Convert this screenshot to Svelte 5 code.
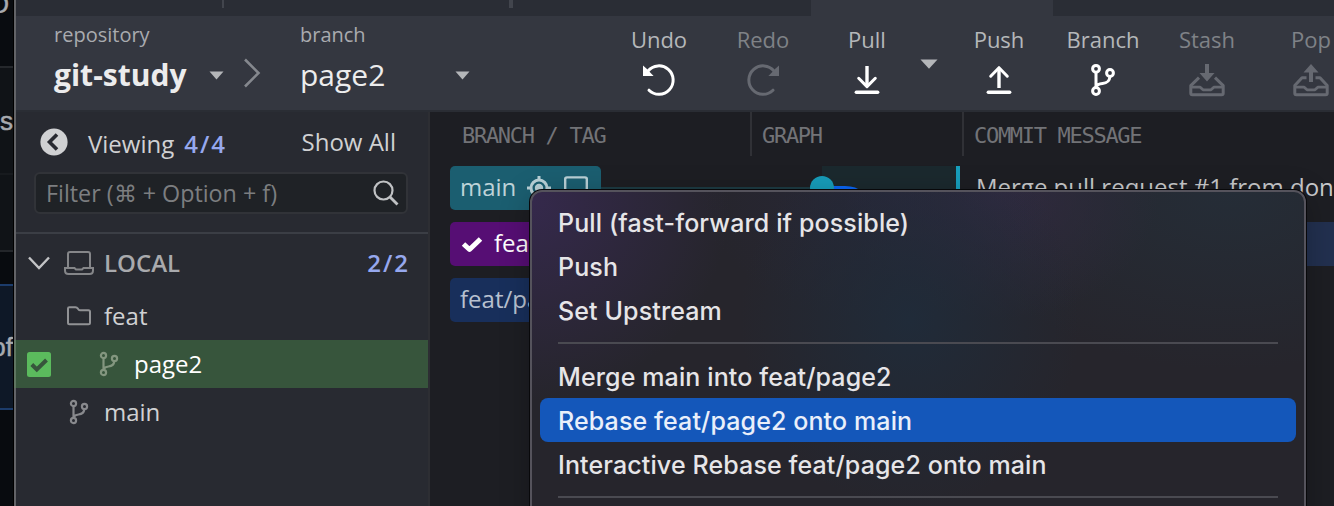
<script>
  const tools = [
    { label: 'Undo', icon: 'undo' },
    { label: 'Redo', icon: 'redo', off: true },
    { label: 'Pull', icon: 'pull', caret: true },
    { label: 'Push', icon: 'push' },
    { label: 'Branch', icon: 'branch' },
    { label: 'Stash', icon: 'stash', off: true },
    { label: 'Pop', icon: 'pop', off: true }
  ];
  const menu = [
    'Pull (fast-forward if possible)',
    'Push',
    'Set Upstream',
    null,
    'Merge main into feat/page2',
    'Rebase feat/page2 onto main',
    'Interactive Rebase feat/page2 onto main',
    null
  ];
  const active = 'Rebase feat/page2 onto main';
</script>

{#snippet fork()}
  <svg class="fork" viewBox="0 0 20 26" width="20" height="26" fill="none" stroke="currentColor" stroke-width="2.2">
    <circle cx="4.5" cy="4.5" r="2.6" /><circle cx="15.5" cy="7.5" r="2.6" /><circle cx="4.5" cy="21.5" r="2.6" />
    <path d="M4.5 7V19M15.3 10.2C15 14.5 12.5 15.2 9.5 15.5C7 15.8 5.5 16.2 4.8 18" />
  </svg>
{/snippet}

<div class="screen">
  <div class="behind">
    <div class="seg a"><span class="cap">D</span></div>
    <div class="seg b"><span>s</span></div>
    <div class="seg c"></div>
    <div class="seg d"></div>
    <div class="seg e"><span>of</span></div>
    <div class="seg f"></div>
  </div>

  <div class="window">
    <div class="tabs">
      <i class="t1"></i><i class="t2"></i><i class="t3"></i><i class="on"></i>
    </div>

    <header class="toolbar">
      <div class="repo">
        <small>repository</small>
        <div class="pick"><b>git-study</b><svg class="caret" width="15" height="9" viewBox="0 0 15 9"><path d="M.5 .5H14.5L7.5 8.5Z" fill="#b4b6b9" /></svg></div>
      </div>
      <svg class="crumb" width="18" height="30" viewBox="0 0 18 30" fill="none" stroke="#85888e" stroke-width="2.6"><path d="M2 1.5L15.5 15L2 28.5" /></svg>
      <div class="ref">
        <small>branch</small>
        <div class="pick"><span>page2</span><svg class="caret" width="15" height="9" viewBox="0 0 15 9"><path d="M.5 .5H14.5L7.5 8.5Z" fill="#b4b6b9" /></svg></div>
      </div>
      <div class="tools">
        {#each tools as t}
          <div class="tool" class:off={t.off}>
            <span>{t.label}</span>
            <svg width="36" height="36" viewBox="0 0 36 36" fill="none" stroke="currentColor" stroke-width="3" stroke-linecap="round">
              {#if t.icon === 'undo' || t.icon === 'redo'}
                <g transform={t.icon === 'redo' ? 'translate(36 0) scale(-1 1)' : undefined}>
                  <path d="M8 28.2A14.2 14.2 0 1 0 7 9" />
                  <path d="M2 3.6V14H12.6L9.2 10.4 5.4 6.6Z" fill="currentColor" stroke="none" />
                </g>
              {:else if t.icon === 'pull'}
                <path d="M18 4V24" stroke-linecap="butt" stroke-width="3.4" /><path d="M9.7 16.3L18 24.6L26.3 16.3" stroke-linejoin="round" /><path d="M7.3 30.3H28.7" stroke-width="3.4" />
              {:else if t.icon === 'push'}
                <path d="M18 6V26" stroke-linecap="butt" stroke-width="3.4" /><path d="M9.7 14.2L18 5.7L26.3 14.2" stroke-linejoin="round" /><path d="M7.3 30.3H28.7" stroke-width="3.4" />
              {:else if t.icon === 'branch'}
                <circle cx="11" cy="6.8" r="3.4" /><circle cx="25" cy="11" r="3.4" /><circle cx="11" cy="29" r="3.4" />
                <path d="M11 10.5V25M24.8 15C24.5 20 21.5 21 17.5 21.4C14.5 21.7 12.3 22 11.3 24" />
              {:else}
                <path stroke-linecap="butt" stroke-linejoin="round" d={t.icon === 'stash' ? 'M10 15.6L1.8 23.6V31.2Q1.8 32.7 3.3 32.7H32.7Q34.2 32.7 34.2 31.2V23.6L26 15.6' : 'M13.5 15.8H9L1.8 23.6V31.2Q1.8 32.7 3.3 32.7H32.7Q34.2 32.7 34.2 31.2V23.6L27 15.8H22.5'} />
                <path stroke-linecap="butt" stroke-linejoin="round" d="M2 25.2H11.2L14 27.8H22L24.8 25.2H34" stroke-width="2.8" />
                {#if t.icon === 'stash'}
                  <path d="M16 2H20V11H25.5L18 19.5L10.5 11H16Z" fill="currentColor" stroke="none" />
                {:else}
                  <path d="M16 20H20V10.5H25.5L18 2L10.5 10.5H16Z" fill="currentColor" stroke="none" />
                {/if}
              {/if}
            </svg>
          </div>
          {#if t.caret}
            <svg class="more" width="18" height="10" viewBox="0 0 18 10"><path d="M.5 .5H17.5L9 9.8Z" fill="#b4b6b9" /></svg>
          {/if}
        {/each}
      </div>
    </header>

    <div class="body">
      <aside>
        <div class="viewing">
          <svg width="28" height="28" viewBox="0 0 28 28"><circle cx="14" cy="14" r="13.6" fill="#d0d1d3" /><path d="M17 6.5L9.5 14L17 21.5" fill="none" stroke="#282a31" stroke-width="3.6" /></svg>
          <span class="v">Viewing</span><span class="n">4/4</span><span class="all">Show All</span>
        </div>
        <div class="filter">
          <span>Filter (⌘ + Option + f)</span>
          <svg width="26" height="26" viewBox="0 0 26 26" fill="none" stroke="#c0c2c4" stroke-width="2.2"><circle cx="10.5" cy="10.5" r="9" /><path d="M17 17L24.5 24.5" stroke-width="2.8" /></svg>
        </div>
        <div class="row local">
          <svg class="chev" width="22" height="14" viewBox="0 0 22 14" fill="none" stroke="#c3c4c6" stroke-width="2.4"><path d="M1 1.5L11 12L21 1.5" /></svg>
          <svg class="laptop" width="30" height="26" viewBox="0 0 30 26" fill="none" stroke="#858689" stroke-width="2"><path d="M4 17V4Q4 2 6 2H24Q26 2 26 4V17" /><path d="M1 18H10.5L12 19.5H18L19.5 18H29V20.5Q29 24 25.5 24H4.5Q1 24 1 20.5Z" /></svg>
          <b>LOCAL</b><span class="n">2/2</span>
        </div>
        <div class="row feat">
          <svg width="24" height="20" viewBox="0 0 24 20" fill="none" stroke="#919295" stroke-width="2" stroke-linejoin="round"><path d="M1 2.6Q1 1.2 2.4 1.2H8.5Q10 1.2 10.7 2.4L11.5 3.5Q12 4.3 13.2 4.3H21.5Q23 4.3 23 5.8V16.8Q23 18.3 21.5 18.3H2.5Q1 18.3 1 16.8Z" /></svg>
          <span>feat</span>
        </div>
        <div class="row current">
          <svg class="box" width="24" height="25" viewBox="0 0 24 25"><rect width="24" height="25" rx="2.5" fill="#5bbb5d" /><path d="M4.8 12.5L9.8 17.5L19.5 8" fill="none" stroke="#37553c" stroke-width="4" /></svg>
          {@render fork()}
          <span>page2</span>
        </div>
        <div class="row trunk">{@render fork()}<span>main</span></div>
      </aside>

      <main>
        <div class="heads"><span class="h1">BRANCH / TAG</span><span class="h2">GRAPH</span><span class="h3">COMMIT MESSAGE</span></div>
        <div class="commit">
          <div class="tag teal"><span>main</span>
            <svg class="target" width="26" height="26" viewBox="0 0 26 26" fill="none" stroke="#b9d0d6" stroke-width="3"><circle cx="13" cy="13" r="8" /><circle cx="13" cy="13" r="4.2" fill="#b9d0d6" stroke="none" /><path d="M13 1V6M1 13H6M20 13H25M13 20V25" /></svg>
            <svg width="26" height="26" viewBox="0 0 26 26" fill="none" stroke="#b9d0d6" stroke-width="2.4"><path d="M2.2 20V4Q2.2 2.4 4 2.4H22Q23.8 2.4 23.8 4V20Z" /></svg>
          </div>
          <div class="link"></div>
          <svg class="node" width="150" height="44" viewBox="0 0 150 44"><path d="M12 0H150V44H12Z" fill="#1b292e" /><path d="M20 22H35Q56 22 56 44" stroke="#0a66f5" stroke-width="4" fill="none" /><circle cx="12" cy="22" r="12" fill="#179cb9" /><path d="M146 0H150V44H146Z" fill="#179fbd" /></svg>
          <span class="msg">Merge pull request #1 from don</span>
        </div>
        <div class="commit">
          <div class="tag purple"><svg width="24" height="18" viewBox="0 0 24 18"><path d="M3.5 9L9.5 14.5L20.5 4" fill="none" stroke="#fff" stroke-width="5" stroke-linejoin="round" /></svg><span>feat/page2</span></div>
          <div class="selected"></div>
        </div>
        <div class="commit"><div class="tag navy"><span>feat/page1</span></div></div>
      </main>
    </div>
  </div>

  <div class="menu">
    {#each menu as item}
      {#if item === null}
        <hr />
      {:else}
        <div class="item" class:active={item === active}>{item}</div>
      {/if}
    {/each}
  </div>
</div>

<style>
  :global(body) { margin: 0; background: #090c10; overflow: hidden; }
  .screen { position: relative; width: 1334px; height: 506px; display: flex; overflow: hidden; font-family: "Open Sans", "Noto Sans", sans-serif; box-sizing: border-box; }
  .screen :global(*) { box-sizing: border-box; }
  svg { display: block; flex: none; }
  span, b, small, .item { white-space: nowrap; }

  .behind { width: 14px; flex: none; border-right: 1px solid #000; background: #0c0f13; display: flex; flex-direction: column; font-family: "Liberation Sans", sans-serif; font-size: 26px; color: #a7aaaf; -webkit-text-stroke: .5px #a7aaaf; }
  .seg { display: flex; justify-content: flex-end; align-items: center; overflow: hidden; flex: none; }
  .a { height: 68px; border-bottom: 2px solid #25282c; background: #090c10; align-items: flex-start; }
  .cap { line-height: 30px; margin: -11px 4px 0 0; }
  .b { height: 107px; border-bottom: 2px solid #171a1e; background: #101317; padding-top: 2px; }
  .c { height: 77px; border-bottom: 2px solid #23262a; background: #101317; }
  .d { height: 32px; background: #080b0f; }
  .e { height: 126px; border: solid #1c3c6b; border-width: 2px 0; background: #0e1827; }
  .f { flex: 1; background: #080b0f; }

  .window { width: 1320px; flex: none; display: flex; flex-direction: column; box-shadow: inset 2px 0 #626367; background: #282a31; }
  .tabs { height: 16px; display: flex; background: #2a2d35; margin-left: 2px; }
  .tabs i { flex: none; }
  .t1 { width: 208px; height: 8px; border-right: 2px solid #42454d; }
  .t2 { width: 289px; height: 8px; border-right: 4px solid #42454d; }
  .t3 { width: 298px; }
  .on { width: 242px; background: #343740; }

  .toolbar { margin-left: 2px; height: 96px; display: flex; background: #343740; border-bottom: 2px solid #2a2d34; flex: none; overflow: hidden; }
  small { display: block; font-size: 20px; line-height: 28px; color: #a9abaf; }
  .repo, .ref, .tools { flex: none; }
  .repo { width: 208px; padding: 5px 0 0 38px; }
  .pick { display: flex; align-items: center; justify-content: space-between; height: 42px; width: 170px; margin-top: 5px; font-size: 30px; line-height: 40px; color: #ececed; }
  .crumb { margin: 42px 0 0 19px; }
  .ref { padding: 5px 0 0 39px; width: 210px; }
  .tools { display: flex; margin-left: 136px; }
  .tool { width: 104px; flex: none; display: flex; flex-direction: column; align-items: center; padding-top: 8px; color: #fff; }
  .tool span { font-size: 22px; line-height: 30px; color: #b5b7ba; }
  .tool svg { margin-top: 8px; }
  .tool.off { color: #666971; }
  .tool.off span { color: #7f8287; }
  .more { margin: 43px 9px 0 1px; }

  .body { display: flex; flex: 1; min-height: 0; }
  aside { width: 416px; flex: none; border-right: 2px solid #2d2e33; font-size: 24px; color: #d0d1d3; }
  .viewing { height: 60px; display: flex; align-items: center; padding: 0 32px 0 26px; }
  .v { margin: 2px 0 0 20px; }
  .n { color: #96a8ee; font-weight: 600; letter-spacing: 2px; margin-right: -1px; }
  .viewing .n { margin: 2px 0 0 10px; }
  .viewing .all { margin: 0 0 2px auto; }
  .filter { margin: 0 20px 18px; height: 42px; border: 2px solid #313338; border-radius: 6px; background: #1f2226; display: flex; align-items: center; justify-content: space-between; padding: 0 7px 0 10px; color: #7c7e80; font-size: 23.3px; }
  .row { height: 48px; display: flex; align-items: center; }
  .row > span, .row > b { padding-bottom: 2px; }
  .local { height: 60px; border-top: 2px solid #3b3e45; margin-left: 2px; padding: 0 19px 0 12px; }
  .laptop { margin: 0 10px 0 14px; }
  .local b { font-weight: 600; color: #a9aaad; }
  .local .n { margin-left: auto; }
  .feat { padding-left: 53px; gap: 13px; }
  .fork { color: #88898d; }
  .current { background: #37553c; padding-left: 13px; color: #fff; box-shadow: inset 2px 0 #5e7561; }
  .current .fork { margin: 0 15px 0 48px; color: #83967f; }
  .trunk { padding-left: 55px; gap: 15px; }

  main { flex: 1; min-width: 0; background: #1d1e23; overflow: hidden; }
  .heads { display: flex; height: 44px; margin-bottom: 10px; align-items: stretch; font: 22px/48px "DejaVu Sans Mono", monospace; letter-spacing: -1.3px; color: #727377; }
  .h1 { width: 322px; padding-left: 32px; border-right: 2px solid #303136; }
  .h2 { width: 212px; padding-left: 10px; border-right: 2px solid #303136; }
  .h3 { padding-left: 10px; }
  .commit { height: 44px; margin-bottom: 12px; display: flex; align-items: center; padding-left: 20px; font-size: 24px; color: #c8c9cb; }
  .tag { height: 44px; border-radius: 5px; display: flex; align-items: center; padding: 0 10px; flex: none; width: 151px; overflow: hidden; }
  .tag span { padding-bottom: 3px; }
  .teal { background: #1b5e70; color: #bed3d8; }
  .target { margin: 0 11px 0 10px; }
  .purple { background: #560e74; color: #fff; gap: 10px; width: 170px; }
  .navy { background: #182f5b; color: #b8c1d0; width: 150px; }
  .link { width: 209px; height: 2px; background: #1d3b43; flex: none; }
  .msg { margin-left: 16px; padding-bottom: 3px; }
  .selected { margin-left: 210px; flex: 1; height: 44px; background: #22304f; }

  .menu { position: absolute; left: 530px; top: 190px; width: 776px; height: 340px; border: 2px solid #55535c; border-radius: 12px; padding: 8px; box-shadow: 0 0 0 1px #08080a, 0 6px 30px rgba(0, 0, 0, .25);
    background: radial-gradient(circle 200px at 0 10px, #35294c, transparent), radial-gradient(ellipse 170px 190px at 380px 130px, #202b39, transparent), radial-gradient(ellipse 180px 130px at 350px 0, #29294280, transparent), radial-gradient(ellipse 160px 130px at 470px 0, #302a3f, transparent), radial-gradient(ellipse 280px 180px at 700px 0, #252d37, transparent), #26252c; background-origin: border-box;
    font: 500 25px/44px Inter, sans-serif; letter-spacing: .12px; color: #e6e5e8; }
  .item { height: 44px; padding-left: 18px; border-radius: 8px; line-height: 47px; }
  .active { background: #1457ba; color: #e9effa; }
  hr { height: 2px; border: 0; margin: 10px 18px; background: #4a4a51; }
</style>
